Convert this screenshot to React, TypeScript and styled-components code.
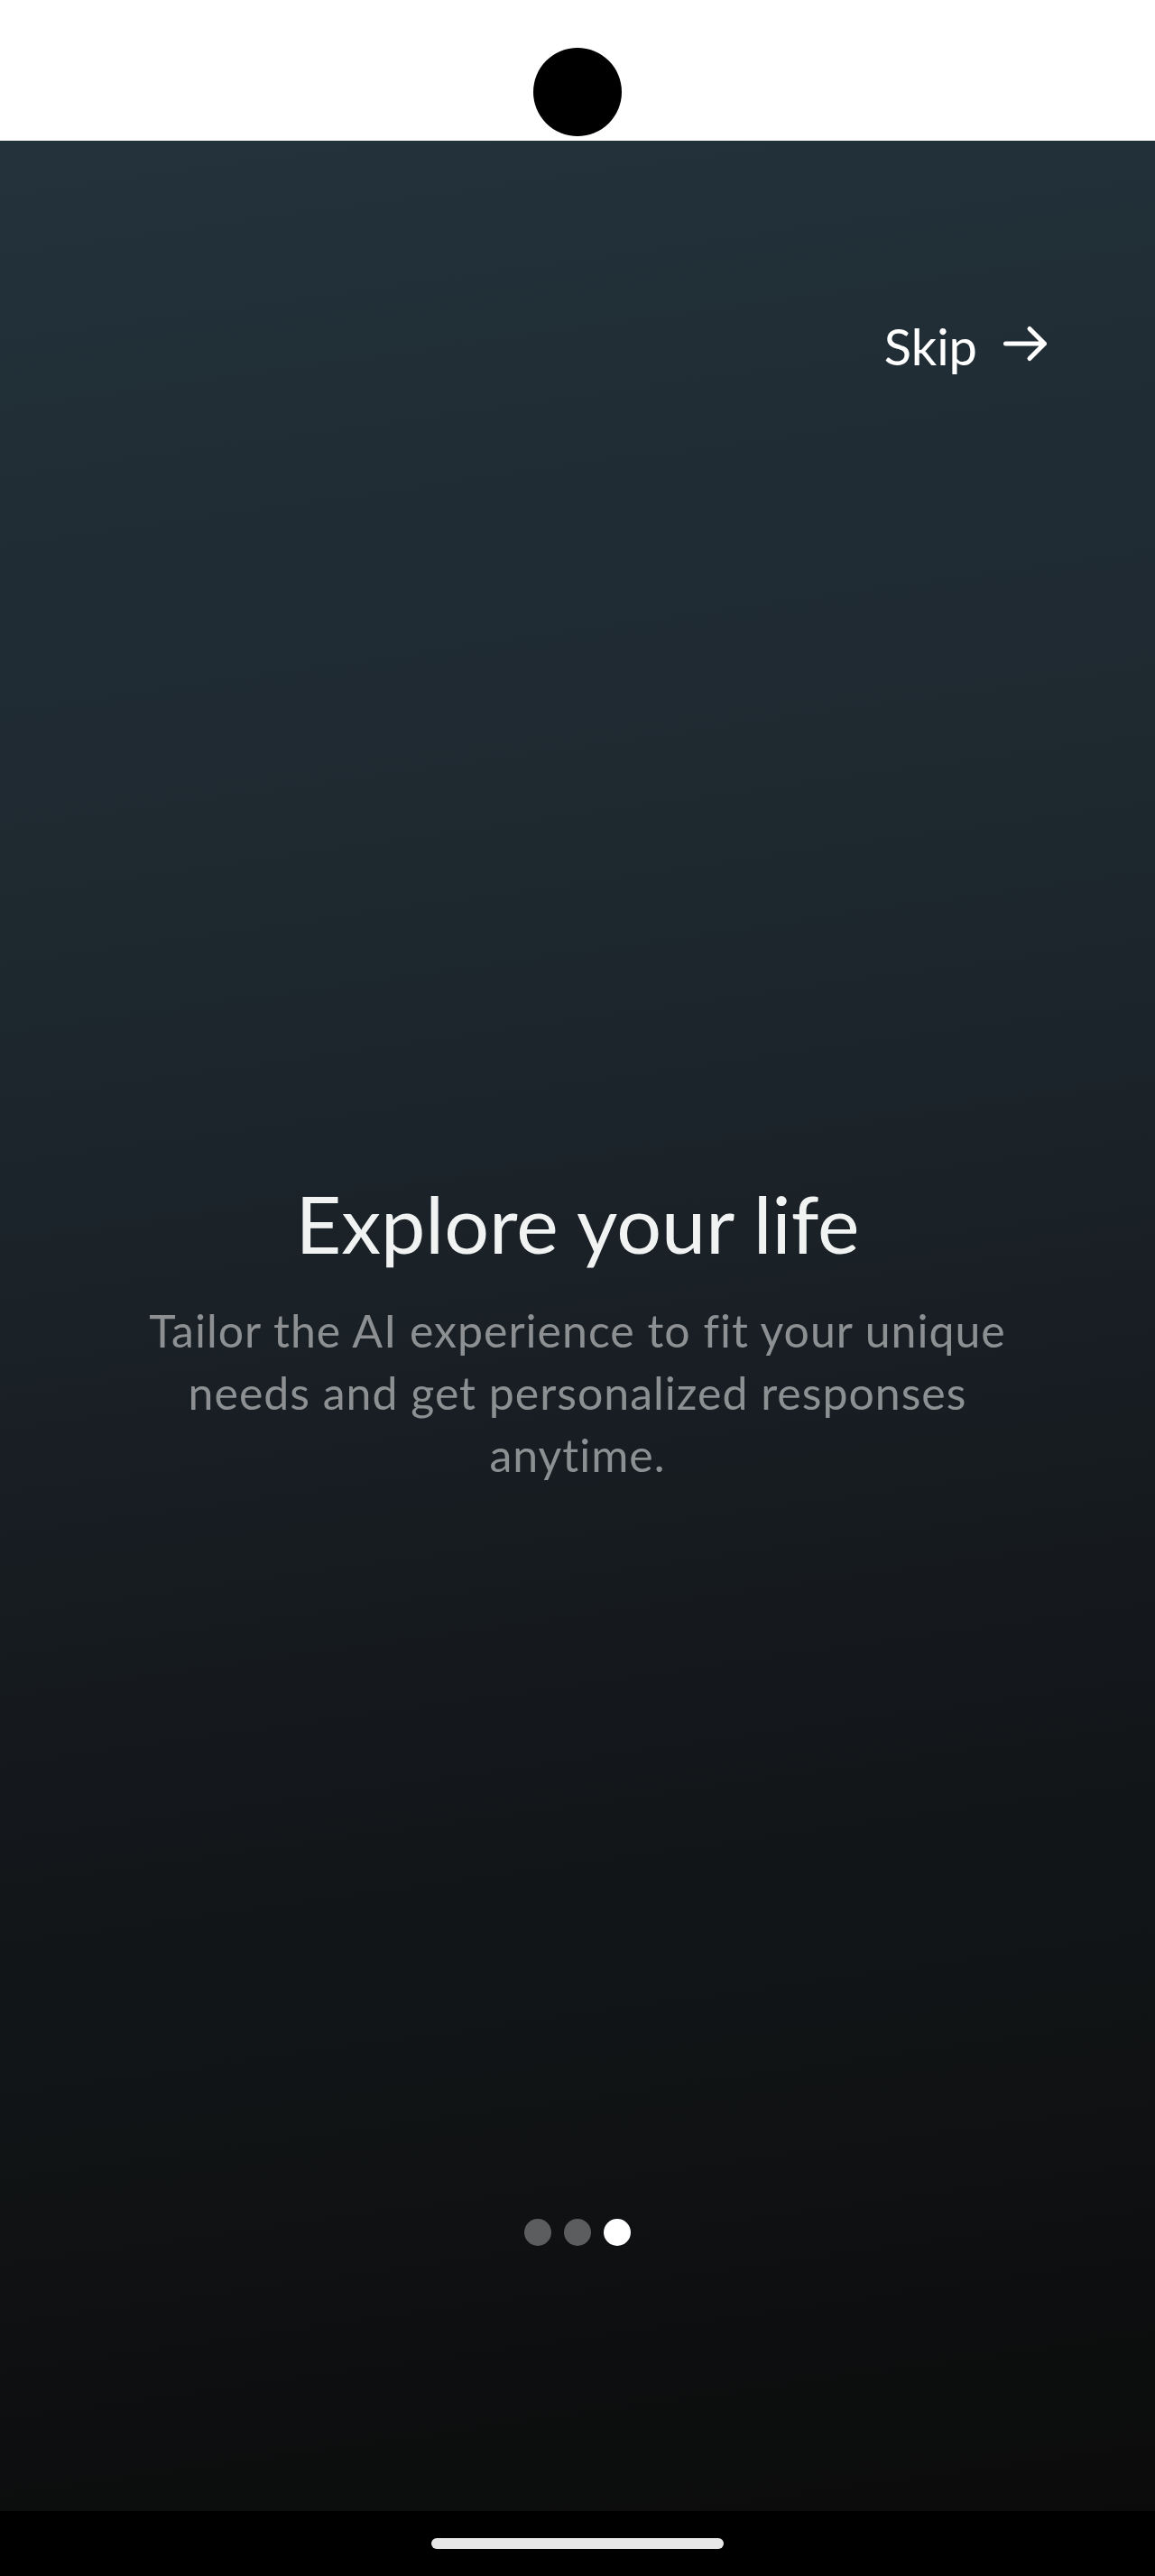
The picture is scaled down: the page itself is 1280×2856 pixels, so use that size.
import React from "react";
import styled, { createGlobalStyle } from "styled-components";

const GlobalStyle = createGlobalStyle`
  html, body {
    margin: 0;
    padding: 0;
    background: #ffffff;
  }
  * { box-sizing: border-box; }
`;

const Device = styled.div`
  width: 1280px;
  height: 2856px;
  display: flex;
  flex-direction: column;
  font-family: "Lato", "Open Sans", sans-serif;
  overflow: hidden;
`;

const StatusBar = styled.div`
  height: 156px;
  flex: none;
  background: #ffffff;
  display: flex;
  justify-content: center;
  padding-top: 53px;
`;

const Camera = styled.div`
  width: 98px;
  height: 98px;
  border-radius: 50%;
  background: #000000;
`;

const Screen = styled.main`
  flex: 1;
  display: flex;
  flex-direction: column;
  align-items: center;
  padding-top: 200px;
  background: linear-gradient(172deg, #23323b 0%, #1c252c 40%, #15191d 62%, #0f1112 85%, #0b0b0b 100%);
`;

const TopRow = styled.div`
  width: 100%;
  display: flex;
  justify-content: flex-end;
  padding-right: 118px;
`;

const SkipButton = styled.button`
  display: flex;
  align-items: center;
  gap: 27px;
  background: none;
  border: none;
  padding: 0;
  color: #ffffff;
  font-family: inherit;
  font-size: 56px;
  line-height: 56px;
  font-weight: 400;
  cursor: pointer;
`;

const ArrowIcon = styled.svg`
  width: 52px;
  height: 44px;
  margin-top: -6px;
`;

const Content = styled.section`
  margin-top: 900px;
  display: flex;
  flex-direction: column;
  align-items: center;
  gap: 41px;
  text-align: center;
`;

const Title = styled.h1`
  margin: 0;
  font-size: 88px;
  line-height: 88px;
  font-weight: 400;
  color: #f1f3f3;
`;

const Subtitle = styled.p`
  margin: 0;
  max-width: 1000px;
  font-size: 50px;
  line-height: 69px;
  letter-spacing: 1px;
  font-weight: 400;
  color: #8d9092;
`;

const Pager = styled.div`
  margin-top: 812px;
  display: flex;
  gap: 14px;
`;

const Dot = styled.span<{ $active?: boolean }>`
  width: 30px;
  height: 30px;
  border-radius: 50%;
  background: ${(p) => (p.$active ? "#ffffff" : "#5b5d5f")};
`;

const NavBar = styled.div`
  height: 72px;
  flex: none;
  background: #000000;
  display: flex;
  justify-content: center;
  padding-top: 30px;
`;

const HomeIndicator = styled.div`
  width: 324px;
  height: 12px;
  border-radius: 6px;
  background: #e8e8e8;
`;

export default function App() {
  return (
    <>
      <GlobalStyle />
      <Device>
        <StatusBar>
          <Camera />
        </StatusBar>
        <Screen>
          <TopRow>
            <SkipButton>
              Skip
              <ArrowIcon viewBox="0 0 52 44" fill="none">
                <path
                  d="M4.5 22H47.5M31 5.5L47.5 22L31 38.5"
                  stroke="#ffffff"
                  strokeWidth="5"
                  strokeLinecap="round"
                  strokeLinejoin="round"
                />
              </ArrowIcon>
            </SkipButton>
          </TopRow>
          <Content>
            <Title>Explore your life</Title>
            <Subtitle>
              Tailor the AI experience to fit your unique needs and get personalized responses anytime.
            </Subtitle>
          </Content>
          <Pager>
            <Dot />
            <Dot />
            <Dot $active />
          </Pager>
        </Screen>
        <NavBar>
          <HomeIndicator />
        </NavBar>
      </Device>
    </>
  );
}
